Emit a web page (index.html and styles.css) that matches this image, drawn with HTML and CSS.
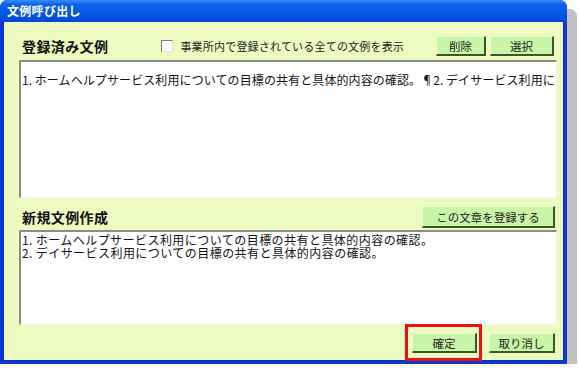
FILE: index.html
```html
<!DOCTYPE html>
<html lang="ja">
<head>
<meta charset="utf-8">
<title>文例呼び出し</title>
<link rel="stylesheet" href="styles.css">
</head>
<body>
<div class="window">
  <div class="titlebar">文例呼び出し</div>
  <div class="content">
    <div class="row row-top">
      <div class="heading">登録済み文例</div>
      <label class="check"><span class="box"></span>事業所内で登録されている全ての文例を表示</label>
      <div class="btns">
        <button class="btn btn-del">削除</button>
        <button class="btn btn-sel">選択</button>
      </div>
    </div>
    <div class="field field-list">1.&#8201;ホームヘルプサービス利用についての目標の共有と具体的内容の確認。¶2.&#8201;デイサービス利用に</div>
    <div class="row row-new">
      <div class="heading">新規文例作成</div>
      <button class="btn btn-reg">この文章を登録する</button>
    </div>
    <div class="field field-new">1.&#8201;ホームヘルプサービス利用についての目標の共有と具体的内容の確認。
2.&#8201;デイサービス利用についての目標の共有と具体的内容の確認。</div>
    <div class="footer">
      <div class="hl-wrap">
        <button class="btn btn-ok">確定</button>
        <span class="highlight"></span>
      </div>
      <button class="btn btn-cancel">取り消し</button>
    </div>
  </div>
</div>
</body>
</html>
```

FILE: styles.css
```css
* { box-sizing: border-box; }
html, body { margin: 0; padding: 0; background: #ffffff; }
body {
  font-family: "Noto Sans CJK JP", "Noto Sans", sans-serif;
  color: #111;
}
.window {
  width: 567px;
  height: 364px;
  background: #0a3ad6;
  border-radius: 7px 7px 0 0;
  box-shadow: 10px 9px 0 #c2c2c2;
  display: flex;
  flex-direction: column;
  overflow: hidden;
}
.titlebar {
  height: 22px;
  flex: none;
  border-radius: 7px 7px 0 0;
  background: linear-gradient(to bottom, #3d8cf8 0%, #0a62ec 20%, #0656e4 60%, #0448d8 100%);
  color: #fff;
  font-size: 12px;
  font-weight: bold;
  line-height: 22px;
  padding-left: 7px;
  letter-spacing: 0.3px;
}
.content {
  flex: 1;
  min-height: 0;
  margin: 0 3px 3px 3px;
  background: #eefbc0;
  padding: 14px 8px 0 15px;
  display: flex;
  flex-direction: column;
  border-left: 1px solid #0a2fa8;
  border-right: 1px solid #0a2fa8;
  border-bottom: 1px solid #0a2fa8;
}
.row {
  display: flex;
  align-items: center;
  flex: none;
  line-height: 20px;
}
.row-top { height: 20px; margin-bottom: 4px; }
.row-new { height: 22px; margin-top: 8px; margin-bottom: 2px; justify-content: space-between; }
.heading {
  font-size: 14px;
  font-weight: bold;
  padding-left: 3px;
  letter-spacing: 0.4px;
  color: #111;
  line-height: 20px;
}
.check {
  display: flex;
  align-items: center;
  font-size: 11px;
  letter-spacing: 0.2px;
  margin-left: 53px;
  color: #222;
  line-height: 16px;
}
.box {
  width: 12px;
  height: 12px;
  background: #fff;
  border-top: 1px solid #7a7a7a;
  border-left: 1px solid #7a7a7a;
  border-right: 1px solid #e0e0e0;
  border-bottom: 1px solid #e0e0e0;
  margin-right: 7px;
}
.btns { margin-left: auto; display: flex; gap: 4px; }
.btn {
  display: block;
  font-family: inherit;
  font-size: 11.5px;
  color: #222;
  background: #c9f6a6;
  border-top: 1px solid #e6ffd6;
  border-left: 1px solid #e6ffd6;
  border-right: 2px solid #3b5628;
  border-bottom: 2px solid #3b5628;
  height: 20px;
  padding: 0;
  margin: 0;
  line-height: 16px;
}
.btn-del { width: 50px; }
.btn-sel { width: 64px; margin-right: 1px; }
.btn-reg { width: 133px; height: 22px; }
.field {
  flex: none;
  background: #fff;
  border-top: 2px solid #8d8d85;
  border-left: 2px solid #8d8d85;
  border-right: 1px solid #f4f4f0;
  border-bottom: 1px solid #f4f4f0;
  white-space: pre;
  overflow: hidden;
  font-size: 12px;
  color: #111;
  width: 538px;
}
.field-list {
  height: 138px;
  padding: 11px 0 0 1px;
  line-height: 14px;
  letter-spacing: 0.1px;
}
.field-new {
  height: 95px;
  padding: 1px 0 0 1px;
  line-height: 13px;
  letter-spacing: 0.45px;
}
.footer {
  flex: none;
  display: flex;
  align-items: flex-start;
  justify-content: flex-end;
  margin-top: 8px;
  gap: 12px;
}
.hl-wrap { position: relative; display: flex; }
.btn-ok { width: 65px; }
.btn-cancel { width: 66px; }
.highlight {
  position: absolute;
  left: -7px;
  top: -9px;
  width: 77px;
  height: 37px;
  border: 3px solid #ee1111;
}
```
